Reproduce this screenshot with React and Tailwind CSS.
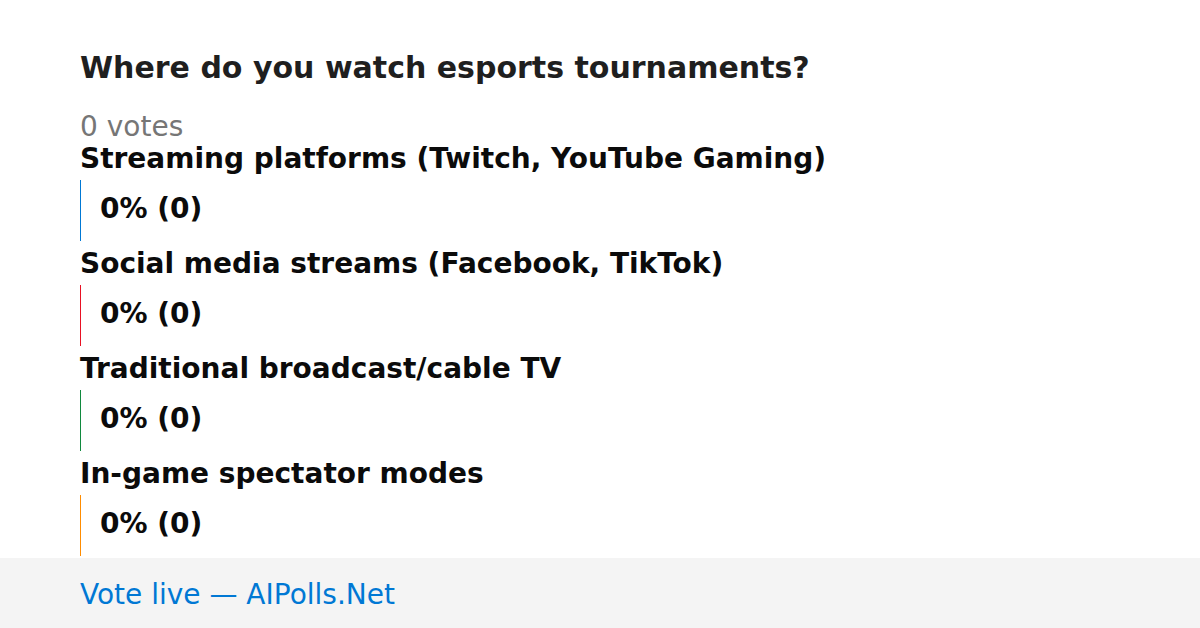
const poll = {
  question: 'Where do you watch esports tournaments?',
  options: [
    { label: 'Streaming platforms (Twitch, YouTube Gaming)', votes: 0, color: 'bg-[#0078d4]' },
    { label: 'Social media streams (Facebook, TikTok)', votes: 0, color: 'bg-[#e81123]' },
    { label: 'Traditional broadcast/cable TV', votes: 0, color: 'bg-[#10893e]' },
    { label: 'In-game spectator modes', votes: 0, color: 'bg-[#ff8c00]' }
  ]
};

const PollOption = ({ option, totalVotes }) => {
  const percent = totalVotes > 0 ? Math.round((option.votes / totalVotes) * 100) : 0;

  return (
    <li>
      <h2 className="pt-2 pb-1.5 text-[28px] leading-[30px] font-bold">{option.label}</h2>
      <div className="grid">
        <div
          className={`col-start-1 row-start-1 min-w-px ${option.color}`}
          style={{ width: `${percent}%` }}
        />
        <span className="col-start-1 row-start-1 pl-5 pt-3 pb-[15px] text-[28px] leading-[34px] font-bold">
          {percent}% ({option.votes})
        </span>
      </div>
    </li>
  );
};

const App = () => {
  const totalVotes = poll.options.reduce((sum, option) => sum + option.votes, 0);

  return (
    <div className="flex flex-col min-h-screen bg-white text-[#0b0b0b] font-['DejaVu_Sans',sans-serif]">
      <main className="grow px-20 pt-12">
        <h1 className="text-[30px] leading-10 font-bold text-[#1f1f1f]">{poll.question}</h1>
        <p className="pt-5 text-[28px] leading-[38px] text-[#767676]">{totalVotes} votes</p>
        <ul className="-mt-2.5">
          {poll.options.map((option) => (
            <PollOption key={option.label} option={option} totalVotes={totalVotes} />
          ))}
        </ul>
      </main>
      <footer className="px-20 pt-[18px] pb-3.5 bg-[#f4f4f4]">
        <a href="#vote" className="block text-[28px] leading-[38px] text-[#0078d4]">
          Vote live — AIPolls.Net
        </a>
      </footer>
    </div>
  );
};

export default App;
